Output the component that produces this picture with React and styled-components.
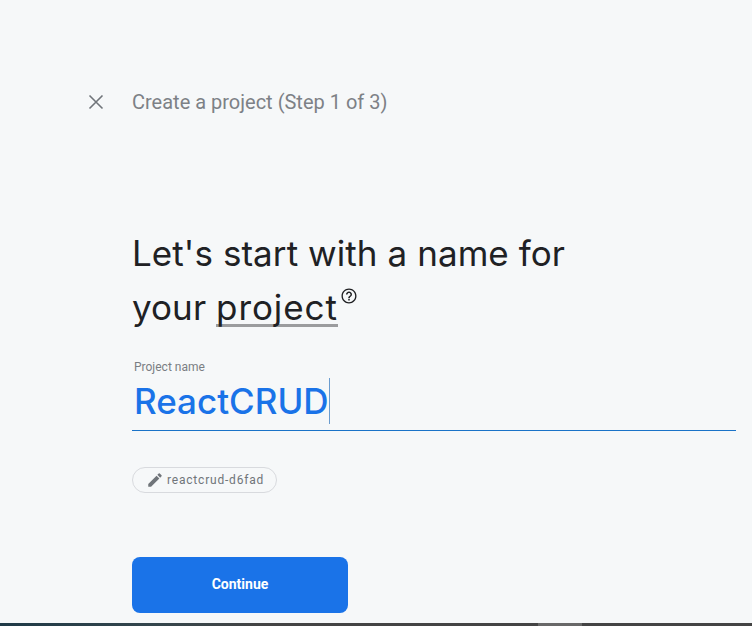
import React from "react";
import styled, { createGlobalStyle } from "styled-components";

const Global = createGlobalStyle`
  html, body { margin: 0; padding: 0; background: #f6f8f9; }
  #root { width: 752px; height: 626px; overflow: hidden; }
`;

const Page = styled.div`
  width: 752px;
  height: 626px;
  display: flex;
  flex-direction: column;
  background: #f6f8f9;
  font-family: Roboto, "Liberation Sans", sans-serif;
`;

const Main = styled.main`
  flex: 1;
  min-height: 0;
  display: flex;
  flex-direction: column;
  padding: 90px 16px 0 132px;
`;

const Header = styled.header`
  display: flex;
  align-items: center;
  height: 24px;
  margin-left: -48px;
  gap: 24px;
`;

const CloseButton = styled.button`
  width: 24px;
  height: 24px;
  padding: 0;
  border: 0;
  background: none;
  color: #70757a;
  display: flex;
  align-items: center;
  justify-content: center;
`;

const StepTitle = styled.div`
  font-size: 20px;
  line-height: 24px;
  color: #7d8186;
`;

const Heading = styled.h1`
  margin: 112px 0 0 0;
  font-family: Inter, "Noto Sans", sans-serif;
  font-weight: 400;
  font-size: 35px;
  line-height: 54px;
  color: #202124;
  letter-spacing: 0.07px;
`;

const Term = styled.span`
  position: relative;
  display: inline-block;
  line-height: 44px;
  letter-spacing: 0.93px;
  border-bottom: 3px solid #9b9c9e;
  height: 39px;
`;

const Help = styled.svg`
  width: 18px;
  height: 18px;
  margin-left: 2px;
  vertical-align: 15px;
  color: #202124;
`;

const Field = styled.div`
  margin-top: 26px;
  height: 70px;
  border-bottom: 1px solid #1a73c8;
  box-sizing: content-box;
  padding-left: 2px;
`;

const FieldLabel = styled.div`
  font-size: 12px;
  line-height: 14px;
  color: #7a7e83;
`;

const FieldValue = styled.div`
  display: inline-block;
  margin-top: 4px;
  font-family: Inter, "Noto Sans", sans-serif;
  font-weight: 450;
  font-size: 35px;
  line-height: 46px;
  color: #1a73e8;
  border-right: 1px solid #6a9ccf;
  padding-right: 0;
`;

const IdChip = styled.div`
  align-self: flex-start;
  margin-top: 36px;
  height: 24px;
  display: flex;
  align-items: center;
  gap: 3px;
  padding: 0 12px 0 13px;
  border: 1px solid #d8dade;
  border-radius: 13px;
  font-size: 12px;
  letter-spacing: 0.8px;
  color: #70757a;
`;

const ContinueButton = styled.button`
  align-self: flex-start;
  margin-top: 64px;
  width: 216px;
  height: 56px;
  padding: 0 0 2px;
  border: 0;
  border-radius: 8px;
  background: #1a73e8;
  color: #fff;
  font-family: Roboto, "Liberation Sans", sans-serif;
  font-size: 14px;
  font-weight: 700;
`;

const Taskbar = styled.div`
  height: 3px;
  flex: none;
  display: flex;
  background: linear-gradient(90deg, #1f3a47 0%, #34464d 20%, #444 35%, #444 100%);
`;

const TaskbarGap = styled.div`
  width: 538px;
`;

const TaskbarItem = styled.div`
  width: 44px;
  background: #686868;
`;

export default function App() {
  return (
    <Page>
      <Global />
      <Main>
        <Header>
          <CloseButton aria-label="Close">
            <svg width="24" height="24" viewBox="0 0 24 24" fill="none" stroke="currentColor" strokeWidth="1.6">
              <path d="M5.5 5.5 18.5 18.5M18.5 5.5 5.5 18.5" />
            </svg>
          </CloseButton>
          <StepTitle>Create a project (Step 1 of 3)</StepTitle>
        </Header>
        <Heading>
          Let's start with a name for
          <br />
          your <Term>project</Term>
          <Help viewBox="0 0 24 24" fill="currentColor">
            <path d="M11 18h2v-2h-2v2zm1-16C6.48 2 2 6.48 2 12s4.48 10 10 10 10-4.48 10-10S17.52 2 12 2zm0 18.2c-4.52 0-8.2-3.68-8.2-8.2S7.48 3.8 12 3.8s8.200 3.680 8.200 8.200-3.680 8.200-8.200 8.200zM12 6c-2.210 0-4 1.790-4 4h2c0-1.100.9-2 2-2s2 .9 2 2c0 2-3 1.750-3 5h2c0-2.250 3-2.500 3-5 0-2.210-1.790-4-4-4z" />
          </Help>
        </Heading>
        <Field>
          <FieldLabel>Project name</FieldLabel>
          <FieldValue>ReactCRUD</FieldValue>
        </Field>
        <IdChip>
          <svg width="18" height="18" viewBox="0 0 24 24" fill="#70757a">
            <path d="M3 17.25V21h3.750L17.810 9.940l-3.750-3.750L3 17.250zM20.710 7.040a1 1 0 0 0 0-1.410l-2.340-2.340a1 1 0 0 0-1.410 0l-1.830 1.830 3.750 3.750 1.830-1.830z" />
          </svg>
          reactcrud-d6fad
        </IdChip>
        <ContinueButton>Continue</ContinueButton>
      </Main>
      <Taskbar>
        <TaskbarGap />
        <TaskbarItem />
      </Taskbar>
    </Page>
  );
}
